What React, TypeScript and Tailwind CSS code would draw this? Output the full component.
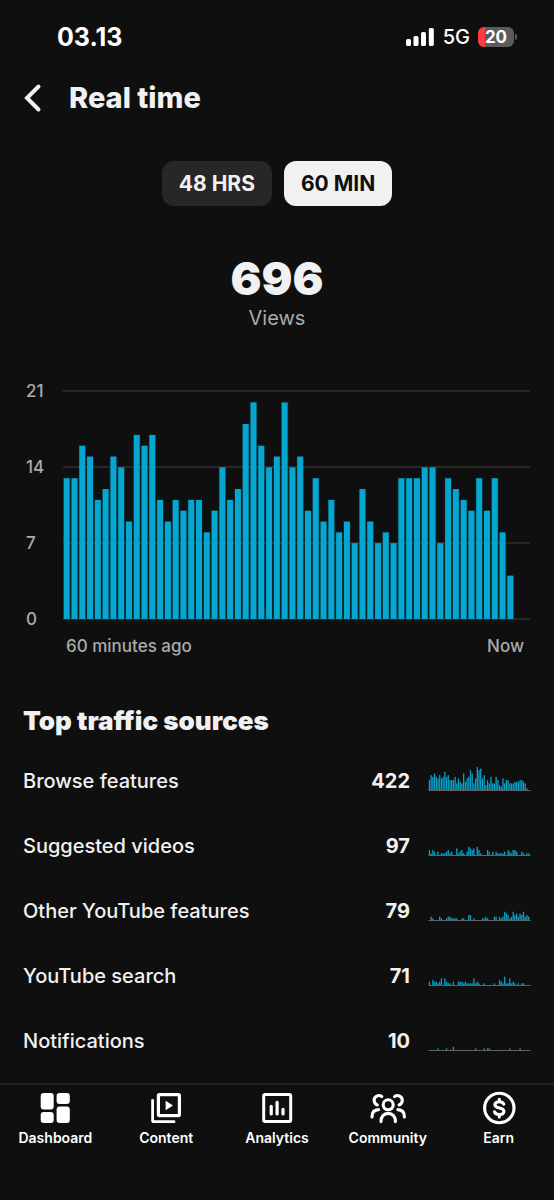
import React, { useState } from "react";

const minuteViews = [
  13, 13, 16, 15, 11, 12, 15, 14, 9, 17, 16, 17, 11, 9, 11, 10, 11, 11, 8, 10,
  14, 11, 12, 18, 20, 16, 14, 15, 20, 14, 15, 10, 13, 9, 11, 8, 9, 7, 12, 9, 7,
  8, 7, 13, 13, 13, 14, 14, 7, 13, 12, 11, 10, 13, 10, 13, 8, 4,
];

const sources = [
  {
    name: "Browse features",
    views: 422,
    trend: [
      6, 9, 8, 10, 8, 7, 9, 7, 8, 11, 8, 9, 6, 6, 6, 8, 4, 7, 5, 4, 10, 5, 7, 8,
      12, 10, 4, 7, 14, 12, 13, 7, 9, 3, 6, 4, 8, 4, 4, 8, 6, 3, 2, 7, 4, 6, 6,
      4, 4, 4, 5, 5, 5, 6, 6, 5, 4, 1, 0, 0,
    ],
  },
  {
    name: "Suggested videos",
    views: 97,
    trend: [
      3, 1, 3, 2, 0, 2, 0, 1, 1, 1, 2, 3, 1, 2, 0, 0, 4, 1, 2, 3, 1, 0, 2, 5, 4,
      3, 4, 0, 5, 3, 1, 0, 0, 0, 3, 2, 0, 2, 0, 2, 1, 1, 1, 1, 2, 0, 3, 2, 1, 3,
      3, 2, 0, 0, 2, 1, 0, 1, 1, 0,
    ],
  },
  {
    name: "Other YouTube features",
    views: 79,
    trend: [
      0, 2, 1, 0, 0, 0, 2, 1, 0, 0, 1, 2, 2, 1, 1, 1, 1, 0, 0, 1, 1, 0, 0, 3, 3,
      0, 1, 0, 0, 0, 0, 1, 1, 2, 1, 0, 0, 0, 2, 2, 0, 2, 1, 2, 5, 4, 3, 1, 2, 5,
      3, 4, 2, 4, 3, 5, 2, 3, 2, 0,
    ],
  },
  {
    name: "YouTube search",
    views: 71,
    trend: [
      2, 0, 3, 2, 2, 1, 2, 4, 0, 4, 2, 1, 1, 0, 2, 0, 0, 2, 2, 2, 1, 2, 1, 1, 1,
      1, 4, 1, 2, 1, 0, 0, 1, 0, 0, 0, 0, 0, 1, 0, 0, 3, 2, 1, 5, 1, 1, 4, 1, 2,
      1, 0, 1, 0, 1, 1, 0, 0, 0, 0,
    ],
  },
  {
    name: "Notifications",
    views: 10,
    trend: [
      0, 0, 0, 0, 0, 1, 0, 0, 0, 0, 1, 0, 0, 0, 2, 0, 0, 0, 0, 0, 0, 0, 0, 0, 0,
      0, 0, 1, 0, 0, 0, 0, 1, 0, 1, 1, 0, 0, 0, 0, 0, 0, 0, 0, 0, 0, 0, 1, 0, 0,
      0, 0, 0, 1, 0, 0, 0, 0, 0, 0,
    ],
  },
];

function Signal() {
  return (
    <svg width="28" height="18" viewBox="0 0 28 18" fill="currentColor" aria-hidden="true">
      <rect x="0" y="11" width="5" height="7" rx="1.6" />
      <rect x="7.5" y="8" width="5" height="10" rx="1.6" />
      <rect x="15" y="4" width="5" height="14" rx="1.6" />
      <rect x="22.8" y="0" width="5" height="18" rx="1.6" />
    </svg>
  );
}

function StatusBar() {
  return (
    <div className="flex h-[74px] items-center justify-between pl-[57px] pr-[37px] text-white">
      <span className="text-[25px] font-bold leading-7">03.13</span>
      <div className="flex items-center">
        <Signal />
        <span className="ml-[9px] text-[20px] font-medium leading-6">5G</span>
        <div className="ml-2 flex h-5 w-9 items-center justify-center overflow-hidden rounded-md bg-[linear-gradient(to_right,#ff3b3f_20%,#5c5c5d_20%)] text-[17px] font-bold leading-5">
          20
        </div>
        <div className="ml-px h-[6px] w-[2px] rounded-r-full bg-[#5c5c5d]" />
      </div>
    </div>
  );
}

function ViewsChart() {
  return (
    <section aria-label="Views in the last 60 minutes" className="pl-[26px] pr-6">
      <div className="flex">
        <div className="-my-3 flex w-[37px] flex-col justify-between text-[17px] font-medium leading-6 text-[#aaa]">
          {[21, 14, 7, 0].map((n) => (
            <span key={n}>{n}</span>
          ))}
        </div>
        <svg
          className="h-[228px] min-w-0 flex-1 overflow-visible"
          viewBox="0 0 600 228"
          preserveAspectRatio="none"
          aria-hidden="true"
        >
          {[-1, 75, 151, 227].map((y) => (
            <rect key={y} x="0" y={y} width="600" height="2" fill="#272727" />
          ))}
          {minuteViews.map((v, i) => (
            <g key={i} fill="#05a7d0">
              <rect x={i * 10} y={228 - v * 10.83} width="10" height={v * 10.83} opacity="0.12" />
              <rect x={i * 10 + 0.9} y={228 - v * 10.83} width="7.7" height={v * 10.83} />
            </g>
          ))}
        </svg>
      </div>
      <div className="mt-[15px] flex justify-between pl-10 pr-[6px] text-[17px] font-medium leading-6 text-[#aaa]">
        <span>60 minutes ago</span>
        <span>Now</span>
      </div>
    </section>
  );
}

function Sparkline({ data }: { data: number[] }) {
  return (
    <svg width="103" height="26" viewBox="0 0 103 26" className="block" aria-hidden="true">
      <rect x="0.5" y="25" width="102" height="1" fill="#606264" />
      {data.map((v, i) => (
        <rect key={i} x={i * 1.71 + 0.8} y={25 - v * 1.65} width="1.3" height={v * 1.65} fill="#08a2ca" />
      ))}
    </svg>
  );
}

function DashboardIcon() {
  return (
    <svg width="36" height="36" viewBox="0 0 36 36" fill="currentColor" aria-hidden="true">
      <rect x="3.7" y="3" width="13" height="16.5" rx="3" />
      <rect x="19.6" y="3" width="13.2" height="11" rx="3" />
      <rect x="3.7" y="22" width="13" height="11" rx="3" />
      <rect x="19.6" y="16.5" width="13.2" height="16.5" rx="3" />
    </svg>
  );
}

function ContentIcon() {
  return (
    <svg width="36" height="36" viewBox="0 0 36 36" fill="none" stroke="currentColor" aria-hidden="true">
      <rect x="10.4" y="4.6" width="21" height="21" rx="1" strokeWidth="3.2" />
      <path d="M4.6 10.3v20.2q0 1.2 1.2 1.2H26" strokeWidth="2.8" strokeLinecap="round" />
      <path d="M17.6 10.8v9.4l7.4-4.7z" fill="currentColor" stroke="none" />
    </svg>
  );
}

function AnalyticsIcon() {
  return (
    <svg width="36" height="36" viewBox="0 0 36 36" fill="none" stroke="currentColor" strokeLinecap="round" aria-hidden="true">
      <rect x="4.7" y="4.5" width="27" height="27" rx="1.5" strokeWidth="3" />
      <path d="M12.2 16.3v7.7M18.1 12.3V24M24 19.3V24" strokeWidth="3.2" />
    </svg>
  );
}

function CommunityIcon() {
  return (
    <svg width="36" height="36" viewBox="0 0 36 36" fill="none" stroke="currentColor" strokeWidth="3.1" strokeLinecap="round" aria-hidden="true">
      <circle cx="18.2" cy="14.8" r="5" />
      <path d="M11 31.6c0-5 2.8-8.2 7.2-8.2s7.2 3.2 7.2 8.2" />
      <path d="M11.8 6.5c-3.2-2.3-7.7-.2-7.7 3.8 0 2.3 1.3 4 3.2 4.7" />
      <path d="M24.6 6.5c3.2-2.3 7.7-.2 7.7 3.8 0 2.3-1.3 4-3.2 4.7" />
      <path d="M2 27c0-4.6 2.4-7.3 6.6-7.4" />
      <path d="M34.4 27c0-4.6-2.4-7.3-6.6-7.4" />
    </svg>
  );
}

function EarnIcon() {
  return (
    <svg width="36" height="36" viewBox="0 0 36 36" fill="none" stroke="currentColor" strokeWidth="3.1" strokeLinecap="round" aria-hidden="true">
      <circle cx="18.3" cy="18" r="14.7" />
      <path d="M18.3 9.2v2.3M18.3 24.7V27" />
      <path d="M22.8 14.2c-.7-1.6-2.3-2.5-4.5-2.5-2.5 0-4.4 1.2-4.4 3.1 0 4.5 9 2 9 6.5 0 2-1.9 3.3-4.6 3.3-2.4 0-4.2-1-4.8-2.8" />
    </svg>
  );
}

const tabs = [
  { label: "Dashboard", Icon: DashboardIcon },
  { label: "Content", Icon: ContentIcon },
  { label: "Analytics", Icon: AnalyticsIcon },
  { label: "Community", Icon: CommunityIcon },
  { label: "Earn", Icon: EarnIcon },
];

export default function App() {
  const [range, setRange] = useState("60 MIN");

  return (
    <div className="flex min-h-screen flex-col bg-[#0f0f0f] font-['Inter','Liberation_Sans',sans-serif] text-[#f1f1f1]">
      <StatusBar />

      <header className="flex h-12 items-center pl-5">
        <button type="button" aria-label="Back" className="flex w-[49px] items-center">
          <svg width="26" height="30" viewBox="0 0 26 30" fill="none" stroke="currentColor" strokeWidth="4" strokeLinecap="round" strokeLinejoin="miter" aria-hidden="true">
            <path d="M18.5 3.5 7 15 18.5 26.5" />
          </svg>
        </button>
        <h1 className="text-[29px] font-extrabold leading-8">Real time</h1>
      </header>

      <main className="flex-1">
        <div className="mt-[39px] flex justify-center gap-3">
          {["48 HRS", "60 MIN"].map((label) => (
            <button
              key={label}
              type="button"
              aria-pressed={range === label}
              onClick={() => setRange(label)}
              className={
                range === label
                  ? "h-[45px] rounded-xl bg-[#f1f1f1] px-[17px] text-[21px] font-bold text-[#0f0f0f]"
                  : "h-[45px] rounded-xl bg-[#272727] px-[17px] text-[21px] font-bold text-[#f1f1f1]"
              }
            >
              {label}
            </button>
          ))}
        </div>

        <div className="mt-[48px] flex flex-col items-center">
          <span className="text-[46px] font-black leading-[48px]">696</span>
          <span className="mt-[2px] text-[20px] leading-7 text-[#aaa]">Views</span>
        </div>

        <div className="mt-[59px]">
          <ViewsChart />
        </div>

        <section className="mt-[47px] px-[23px]">
          <h2 className="text-[26px] font-black leading-8">Top traffic sources</h2>
          <table className="mt-[11px] w-full border-collapse">
            <tbody>
              {sources.map((s) => (
                <tr key={s.name} className="h-[65px]">
                  <th scope="row" className="p-0 text-left text-[20px] font-medium leading-7">
                    {s.name}
                  </th>
                  <td className="p-0 text-right text-[20px] font-bold leading-7">{s.views}</td>
                  <td className="w-[121px] pb-[6px] pl-[18px] pr-0 pt-0">
                    <Sparkline data={s.trend} />
                  </td>
                </tr>
              ))}
            </tbody>
          </table>
        </section>
      </main>

      <nav aria-label="Main" className="grid h-[117px] grid-cols-5 items-start border-t-2 border-[#222] pt-[5px]">
        {tabs.map(({ label, Icon }) => (
          <a key={label} href={"#" + label.toLowerCase()} className="flex flex-col items-center text-white">
            <Icon />
            <span className="mt-[2px] text-[14px] font-semibold leading-5">{label}</span>
          </a>
        ))}
      </nav>
    </div>
  );
}
